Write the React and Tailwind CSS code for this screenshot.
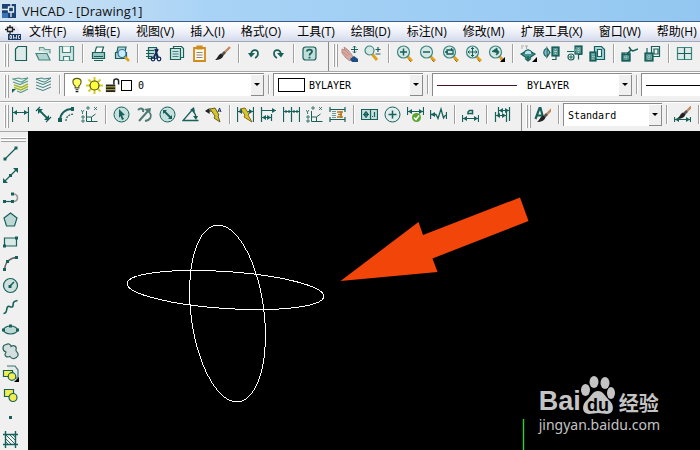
const Icon = ({ children, className = "h-[17px] w-[17px]" }) => (
  <svg
    className={`shrink-0 ${className}`}
    viewBox="0 0 17 17"
    fill="none"
    stroke="#17605a"
    strokeWidth="1.2"
    aria-hidden="true"
  >
    {children}
  </svg>
);

const Lens = ({ children }) => (
  <>
    <path d="M11.500 11.500L16 16" stroke="#e0a020" strokeWidth="2.800" />
    <path d="M12.500 14.500L15 17" stroke="#a5690c" strokeWidth="1" />
    <circle cx="7.500" cy="7" r="6" fill="#d5e8e6" stroke="#3d8780" />
    {children}
  </>
);

const Hatch = ({ x, y, w, h }) => (
  <>
    <rect x={x} y={y} width={w} height={h} fill="#5f9a94" />
    <path
      d={`M${x} ${y + h / 2}h${w}M${x + w / 2} ${y}v${h}`}
      stroke="#a9cfca"
      strokeDasharray="1 1"
    />
  </>
);

const Brush = () => (
  <>
    <path d="M16 2L9 9" stroke="#c08a62" strokeWidth="2.400" />
    <path d="M11 7L8 10" stroke="#555" strokeWidth="2.600" />
    <path d="M9.500 10.500C8 14 5 15 1 15C4 13 4 9.500 7 8.500Z" fill="#222" stroke="none" />
  </>
);

const Corner = () => <path d="M17 12v5h-5z" fill="#000" stroke="none" />;

// filled arrow heads on a horizontal dimension line
const Heads = ({ y, left = 2, right = 15 }) => (
  <path
    d={`M${left} ${y}l4-2.500v5zM${right} ${y}l-4-2.500v5z`}
    fill="#17605a"
    stroke="none"
  />
);

const icons = {
  new: <path d="M6 1.500h8.500v14h-11V4z" fill="#dcebe9" />,
  open: (
    <>
      <path d="M4.500 5.500V2.500h4l1.500 2h5v4" fill="#c5dcda" stroke="#5f9993" />
      <path d="M1 8.500h11l3 6.500H4z" fill="#b5d4d0" stroke="#3d8780" />
    </>
  ),
  save: (
    <>
      <path d="M1.500 1.500h14v14h-14z" fill="#d7e8e6" stroke="#3d8780" />
      <path d="M4.500 1.500v6h8v-6M5.500 15.500v-4h6v4" fill="#f4f8f7" stroke="#3d8780" />
    </>
  ),
  print: (
    <>
      <path d="M5 7l1.500-5h7L12 7" fill="#fff" />
      <path d="M2.500 7.500h12v6h-12z" fill="#9cc6c1" />
      <path d="M4 11.500h9M4 15.500h9" />
    </>
  ),
  preview: (
    <>
      <path d="M4 7l1-5h8l-1 5M2.500 7.500h11v6h-11z" fill="#b4d5d1" />
      <path d="M11 11l5 5" stroke="#e0a020" strokeWidth="2.500" />
      <circle cx="9" cy="8.500" r="4" fill="#cfe9ff" stroke="#2878a8" />
    </>
  ),
  cut: (
    <>
      <path d="M3.500 2.500h8v11h-8z" fill="#bfdad7" />
      <path d="M1 5.500h8M1 8.500h8M1 11.500h6" />
      <path d="M10 4l3 8M13 4l-4 8" stroke="#12235c" strokeWidth="1.700" />
      <circle cx="8" cy="14" r="1.800" stroke="#12235c" />
      <circle cx="14" cy="14" r="1.800" stroke="#12235c" />
    </>
  ),
  copy: (
    <>
      <path d="M5.500 4.500v-3h8l2 2v9h-3" fill="#e9f2f1" />
      <path d="M2.500 3.500h10v11h-10z" fill="#cfe3e1" />
      <path d="M4.500 6.500h6M4.500 9h6M4.500 11.500h6" stroke="#3d8780" />
    </>
  ),
  paste: (
    <>
      <path d="M3 3h11v13H3z" fill="#fff6e4" stroke="#d18a1e" strokeWidth="1.800" />
      <path d="M6 1h5v3H6z" fill="#d18a1e" stroke="#d18a1e" />
      <path d="M5.500 7.500h6M5.500 10h6M5.500 12.500h6" stroke="#888" strokeWidth="1" />
    </>
  ),
  brush: <Brush />,
  undo: (
    <>
      <path d="M5 9C6 4 12 4 12 8.500C12 11 11 12 9 13" strokeWidth="1.700" />
      <path d="M2 8h7l-4 4.500z" fill="#17605a" stroke="none" />
    </>
  ),
  redo: (
    <>
      <path d="M12 9C11 4 5 4 5 8.500C5 11 6 12 8 13" strokeWidth="1.700" />
      <path d="M15 8H8l4 4.500z" fill="#17605a" stroke="none" />
    </>
  ),
  help: (
    <>
      <rect x="2" y="2" width="13" height="13" rx="2.500" fill="#c2deda" />
      <path d="M6 6.500C6 4 11 4 11 6.500C11 8.500 8.500 8 8.500 10.500M8.500 11.800v1.700" strokeWidth="1.800" />
    </>
  ),
  pan: (
    <>
      <path d="M1 4l3 1-1-3 4 3 4 5 1 3-3 3-4-3-4-5z" fill="#d8aaa2" stroke="#b98982" strokeWidth="1" />
      <path d="M2 7l5 4M4 5l5 5" stroke="#b98982" strokeWidth=".8" />
      <path d="M9 14l4-3 4 3v3h-6z" fill="#1c4f84" stroke="none" />
      <path d="M13.500 1v7M10 4.500h7M12 2.500l1.500-1.500L15 2.500M12 6.500L13.500 8 15 6.500" strokeWidth="1" />
    </>
  ),
  zoomRealtime: (
    <>
      <path d="M8 9l5 6" stroke="#e0a020" strokeWidth="3" />
      <circle cx="5.500" cy="5.500" r="4.500" fill="#d5e8e6" stroke="#3d8780" />
      <path d="M11.500 4.500h5M14 2v5M11.500 9h5" />
    </>
  ),
  zoomIn: (
    <Lens>
      <path d="M4 7h7M7.500 3.500v7" strokeWidth="1.500" />
    </Lens>
  ),
  zoomOut: (
    <Lens>
      <path d="M4 7h7" strokeWidth="1.500" />
    </Lens>
  ),
  zoomWindow: (
    <Lens>
      <path d="M5 5h6v4H5zM3 7h3M9.500 3v3" strokeWidth="1.300" />
    </Lens>
  ),
  zoomExtents: (
    <Lens>
      <path d="M3 7h9M7.500 2.500v9M4.500 5.500L3 7l1.500 1.500M10.500 5.500L12 7l-1.500 1.500M6 4l1.500-1.500L9 4M6 10l1.500 1.500L9 10" strokeWidth="1" />
    </Lens>
  ),
  zoomPrev: (
    <>
      <Lens>
        <path d="M4 6.500l5-3.500v2c3 1 2 4-1 5 1-2 1-2 1-2.500z" fill="#17605a" strokeWidth=".8" />
      </Lens>
      <Corner />
    </>
  ),
  block: (
    <>
      <path d="M1 9l7-4 7 4-7 5z" fill="#4d918b" />
      <path d="M4 9a4 4 0 0 1 8 0" fill="#b5e2ef" />
      <path d="M8 11v5M5 13.500l3 2.500 3-2.500" />
      <path d="M1 1h3M1 3h2M5 1h3M6.500 1v3" stroke="#aaa" strokeWidth="1" />
      <Corner />
    </>
  ),
  insertBlock: (
    <>
      <Hatch x={9} y={2} w={7} h={9} />
      <path d="M9.500 2.500h6v8h-6zM9 14.500h4v-4" />
      <path d="M3 3.500c-3 2-3 6 0 8M4 3l3 4.500L4 12z" fill="#7fbcd4" />
    </>
  ),
  attach: (
    <>
      <Hatch x={9} y={1} w={7} h={8} />
      <path d="M1 6.500h7M9.500 1.500h6v8h-3v5" />
      <circle cx="5" cy="12" r="3" fill="#fff" />
      <path d="M3 12h4M5 10v4" strokeWidth="1" />
    </>
  ),
  xref: (
    <>
      <path d="M5.500 3.500v-2h7l3 3v10h-10z" fill="#a5d6dc" />
      <path d="M8.500 4.500h4v7h-4z" fill="#fff" />
      <Hatch x={1} y={7} w={6} h={9} />
      <path d="M1.500 7.500h5v8h-5z" />
    </>
  ),
  refEdit: (
    <>
      <Hatch x={1} y={8} w={8} h={8} />
      <path d="M1.500 9.500h7v6h-7zM6 9l4-4 2 1 5-2M10 5L8 2" strokeWidth="1.500" />
    </>
  ),
  refSave: (
    <>
      <path d="M7.500 1.500h8v10h-8zM10 4h4v5h-4zM3 3v5" />
      <Hatch x={1} y={8} w={8} h={8} />
      <path d="M1.500 8.500h7v7h-7z" />
    </>
  ),
  viewports: (
    <>
      <path d="M1.500 2.500h14v12h-14z" fill="#dcebe9" stroke="#3d8780" />
      <path d="M8.500 2.500v12M1.500 8.500h14" />
    </>
  ),
  layers: (
    <>
      <path d="M1 3l6-1 2 1 7-1-6 4-3-.5zM1 6l7 2.500L16 5" fill="#e8f2ef" stroke="#5a9a8f" />
      <path d="M2 9l7 2.500 7-3.500M2 11.500L9 14l7-3.500" stroke="#a3bb28" strokeWidth="1.500" />
      <path d="M5 15l4 1.500 7-3.500" stroke="#5a9a8f" />
      <path d="M0 17v-4h4z" fill="#17605a" stroke="none" />
    </>
  ),
  layerStates: (
    <path
      d="M1 3l6-1 2 1 7-1-6 4-3-.5zM1 6l7 2.500L16 5M1 9l7 2.500L16 8M1 12l7 2.500 8-3.500"
      fill="#e8f2ef"
      stroke="#447f80"
      strokeWidth="1"
    />
  ),
  dimLinear: (
    <>
      <path d="M.5 1v15M16.500 1v15M1 6.500h15" />
      <Heads y={6.5} left={1} right={16} />
    </>
  ),
  dimAligned: (
    <>
      <path d="M4 4l9 9" strokeWidth="1.800" />
      <path d="M1 5l4-4M11 16l5-5" />
      <path d="M3 3h5L3 8zM14 14V9l-5 5z" fill="#17605a" stroke="none" />
    </>
  ),
  dimArc: (
    <>
      <path d="M2 14C2 8 7 3 14 3" strokeWidth="1.800" />
      <path d="M8 15c0-4 3-7 8-7" strokeDasharray="2 1" />
      <path d="M0 12h4v4H0zM13 1h3v4h-3z" fill="#17605a" stroke="none" />
    </>
  ),
  ordinate: (
    <>
      <path d="M5.500 5v10.500h11M5.500 11h5l4-3M10.500 11v4" strokeWidth="1" />
      <path d="M0 4l1.500 2L3 4M1.500 6v2M6 1h2v2H6zM13 1l3 3M16 1l-3 3M1 10h2v2H1zM1 14h2v2H1z" strokeWidth=".8" />
    </>
  ),
  dimPick: (
    <>
      <circle cx="8.500" cy="8.500" r="7.500" fill="#c6e0de" strokeWidth="1" />
      <path d="M6 3l6 6-3 .5 2 3.500-2 1-1.500-4L6 12z" fill="#17605a" stroke="none" />
    </>
  ),
  dimJog: (
    <>
      <path d="M2 4C5 1 8 3 7 6M12 5l-9 10" strokeWidth="2" stroke="#4e7b73" />
      <path d="M8 3l7-1-1 6z" fill="#4e7b73" stroke="none" />
      <path d="M9 15c6-1 7-5 5-8" strokeWidth="1.800" stroke="#4e7b73" />
    </>
  ),
  dimDiameter: (
    <>
      <circle cx="8.500" cy="8.500" r="7.500" fill="#c6e0de" strokeWidth="1" />
      <path d="M5 5l7 7" strokeWidth="2" />
      <path d="M4 8V4h4zM13 9v4H9z" fill="#17605a" stroke="none" />
    </>
  ),
  dimAngular: (
    <>
      <path d="M16.500 14.500H1L11 3M10 4c2 2 4 4 4 8" strokeWidth="1.300" />
      <path d="M8 4l4-3 1 5zM11 10h5l-2 4z" fill="#17605a" stroke="none" />
    </>
  ),
  dimQuick: (
    <>
      <path d="M1 5h11M1 5l3-2v4z" stroke="#222" fill="#222" />
      <path d="M5 3l5-1 4 7-1 1 2 6-6-4 1-2z" fill="#d6c52c" stroke="#66601b" strokeWidth="1" />
      <path d="M13 6l1.500-4L16 6M13.500 5h2" stroke="#23306b" strokeWidth="1" />
    </>
  ),
  quickDim: (
    <>
      <path d="M.5 1v15M16.500 1v15M1 5.500h15" />
      <path d="M3 3l5-1 4 6-1 1 4 7-8-5 1-2z" fill="#d6c52c" stroke="#8c6a1b" strokeWidth="1" />
      <Heads y={5.5} left={1} right={16} />
    </>
  ),
  baseline: (
    <>
      <path d="M1.500 1v15M2 4.500h14M2 11.500h9M11.500 8v7" />
      <path d="M16 4.500l-4-2.500v5z" fill="#17605a" stroke="none" />
      <Heads y={11.5} left={2} right={11} />
    </>
  ),
  continue: (
    <path d="M.5 1v15M8.500 1v15M16.500 1v15M1 5.500h15M3 4v3M6 4v3M11 4v3M14 4v3" />
  ),
  tolerance: (
    <>
      <path d="M1 1v5M16 1v5M1 11v5M16 11v5M1 3.500h15M1 13.500h15" />
      <path d="M8 6h6M9 8.500h4M8 11h6M12 5v7" stroke="#b8761a" strokeWidth="1.600" />
      <path d="M4 5v7M6 5v7" strokeDasharray="1 1" />
    </>
  ),
  frame: (
    <>
      <path d="M.5 3.500h16v10H.500z" fill="#c6dfdc" />
      <path d="M9.500 3.500v10M2 8.500h6M5 5v7M13.500 6v5M11 10.500h1" />
      <circle cx="5" cy="8.500" r="1.800" />
    </>
  ),
  center: (
    <>
      <circle cx="8.500" cy="8.500" r="7.500" fill="#e2eeed" strokeWidth="1" />
      <path d="M8.500 4.500v8M4.500 8.500h8" strokeWidth="1.500" />
    </>
  ),
  inspect: (
    <>
      <path d="M.5 1v8M16.500 1v8M1 5.500h15" />
      <Heads y={5.5} left={1} right={16} />
      <circle cx="9.500" cy="11.500" r="4.500" fill="#5aa52f" stroke="none" />
      <path d="M7 11.500l2 2 3-4" stroke="#fff" strokeWidth="1.500" />
    </>
  ),
  jogLine: (
    <>
      <path d="M.5 4v9M16.500 6v7M1 8.500h5l2 4L11 3l2.500 9 2-3" strokeWidth="1.300" />
      <path d="M1 8.500L5 6v5z" fill="#17605a" stroke="none" />
    </>
  ),
  dimEdit: (
    <>
      <path d="M.5 9v7M16.500 9v7M1 12.500h15" />
      <Heads y={12.5} left={1} right={16} />
      <path d="M6 8.500V6l1.500-1.500h3v4M6 7.500h4" strokeWidth="1.500" />
    </>
  ),
  dimTextEdit: (
    <>
      <path d="M1.500 6v10M12.500 6v10M2 9.500h11M4.500 1v7M15.500 1v14M5 4.500h10" />
      <Heads y={9.5} left={2} right={12} />
      <Heads y={4.5} left={5} right={15} />
    </>
  ),
  textStyle: (
    <>
      <path d="M1.500 13l4-11h1l3 11M3 9.500h5" strokeWidth="2.200" />
      <g transform="translate(2 1)">
        <Brush />
      </g>
    </>
  ),
  dimStyle: (
    <>
      <g transform="translate(2 -2)">
        <Brush />
      </g>
      <path d="M.5 11v5M16.500 11v5M1 13.500h15" />
      <Heads y={13.5} left={1} right={16} />
    </>
  ),
  line: (
    <>
      <path d="M3 14L14 3" />
      <path d="M1.500 12.500h3v3h-3zM12.500 1.500h3v3h-3z" fill="#17605a" stroke="none" />
    </>
  ),
  xline: (
    <>
      <path d="M3 14L14 3" />
      <path d="M1 11v5h5zM11 1h5v5zM7 7h3v3H7z" fill="#17605a" stroke="none" />
    </>
  ),
  pline: (
    <>
      <path d="M1 12.500h9" />
      <path d="M11 5c6 0 6 7.500 0 7.500" stroke="#999" strokeWidth="1.600" />
      <path d="M1 11h3v3H1zM9 11h3v3H9zM9 3.500h3v3H9z" fill="#17605a" stroke="none" />
    </>
  ),
  polygon: <path d="M8.500 2l6.500 5-2.500 8h-8L2 7z" fill="#bcd8d5" />,
  rectangle: (
    <>
      <path d="M2.500 5h12v8h-12z" fill="#d9e9e7" />
      <path d="M1 11.500h3v3H1zM13 3.500h3v3h-3z" fill="#17605a" stroke="none" />
    </>
  ),
  arc: (
    <>
      <path d="M2.500 15C3 8 7 3 15 2.500" stroke="#666" strokeWidth="1.400" />
      <path d="M1 13h3v3H1zM4 5h3v3H4zM13 1h3v3h-3z" fill="#17605a" stroke="none" />
    </>
  ),
  circle: (
    <>
      <circle cx="8.500" cy="8.500" r="7" fill="#cfe1df" />
      <path d="M8 9l4-4" strokeWidth="1.600" />
      <path d="M6.500 8h3v3h-3z" fill="#17605a" stroke="none" />
    </>
  ),
  spline: <path d="M1.500 14.500c5 0 1.500-8 6-7 5 2 3-2 4-4 1-1.500 2-1.500 4-2" strokeWidth="1.600" />,
  ellipse: (
    <>
      <ellipse cx="8.500" cy="9" rx="7" ry="4" fill="#bcd8d5" />
      <path d="M0 7.500h3v3H0zM14 7.500h3v3h-3zM7 3.500h3v3H7z" fill="#17605a" stroke="none" />
    </>
  ),
  cloud: (
    <path
      d="M4 9C0 8 0 2 4 1.500c3-1.500 5 0 5 2 3-2 6 0 5 3-1 2 3 3 2 6-2 4-6 4-8 1-3 1-5 0-5-2 0-1 1-1.500 1-2.500z"
      fill="#d3dfde"
      stroke="#2f625e"
    />
  ),
  insert: (
    <>
      <path d="M5 1h8l3 4v8H8" fill="#e1ecea" stroke="#3d7470" />
      <path d="M1.500 5.500h9v6h-9z" fill="#f3ee4f" />
      <circle cx="10" cy="11.500" r="3.800" fill="#f3ee4f" />
      <Corner />
    </>
  ),
  makeBlock: (
    <>
      <path d="M2.500 2.500h9v7h-9z" fill="#f3ee4f" />
      <circle cx="11" cy="10.500" r="4" fill="#f3ee4f" />
    </>
  ),
  point: <path d="M7 7h3v3H7z" fill="#17605a" stroke="none" />,
  hatch: (
    <>
      <path d="M3.500 0v17M13.500 0v17M1 3.500h15M1 13.500h15" strokeWidth="1.400" />
      <path d="M4 8l5 5M4 4l9 9M8 4l5 5M4 11l2 2M11 4l2 2" strokeWidth=".9" />
    </>
  ),
};

const menus = [
  "文件(F)",
  "编辑(E)",
  "视图(V)",
  "插入(I)",
  "格式(O)",
  "工具(T)",
  "绘图(D)",
  "标注(N)",
  "修改(M)",
  "扩展工具(X)",
  "窗口(W)",
  "帮助(H)",
];

const standardTools = "new open save | print preview | cut copy paste brush | undo redo | help";
const zoomTools =
  "pan zoomRealtime | zoomIn zoomOut zoomWindow zoomExtents zoomPrev | block insertBlock attach xref | refEdit refSave | viewports";
const dimTools =
  "dimLinear dimAligned dimArc ordinate | dimPick dimJog dimDiameter dimAngular dimQuick | quickDim baseline continue ordinate tolerance | frame center inspect jogLine | dimEdit | dimTextEdit";
const drawTools =
  "line xline pline polygon rectangle arc circle spline ellipse cloud insert makeBlock point hatch";

const Grip = () => (
  <div className="mt-0.5 ml-1 flex h-[23px] w-[5px] shrink-0 justify-between">
    <span className="w-0.5 border-r border-[#a0a0a0] bg-white" />
    <span className="w-0.5 border-r border-[#a0a0a0] bg-white" />
  </div>
);

const Separator = () => (
  <div className="flex h-[23px] w-[9px] shrink-0 justify-center py-0.5">
    <span className="w-0.5 border-l border-[#a0a0a0] bg-white" />
  </div>
);

const ToolButton = ({ name }) => (
  <button
    type="button"
    aria-label={name}
    className="flex h-[23px] w-[23px] shrink-0 items-center justify-center hover:bg-[#dfe9f5]"
  >
    <Icon>{icons[name]}</Icon>
  </button>
);

const Tools = ({ list }) =>
  list
    .split(" ")
    .map((name, i) => (name === "|" ? <Separator key={i} /> : <ToolButton key={i} name={name} />));

const Combo = ({ label, value, width, children, selectClass = "" }) => (
  <div
    className={`flex h-[23px] shrink-0 items-center border-t border-l border-[#8a8a8a] bg-white ${width}`}
  >
    {children}
    <select
      aria-label={label}
      defaultValue={value}
      className={`h-full min-w-0 flex-1 appearance-none bg-transparent font-['DejaVu_Sans_Mono','Noto_Sans_CJK_SC',monospace] text-[10px] text-black outline-none ${selectClass}`}
    >
      <option>{value}</option>
    </select>
    <span className="pointer-events-none flex h-[21px] w-[13px] shrink-0 items-center justify-center border-r border-b border-[#8a8a8a] bg-[#f0f0f0]">
      <span className="border-x-3 border-t-3 border-x-transparent border-t-black" />
    </span>
  </div>
);

const LayerIcons = () => (
  <div className="flex shrink-0 items-center gap-px pl-1">
    <Icon className="h-4 w-4">
      <path d="M8.500 1.500c-6 0-5 6-2 8v2h4v-2c3-2 4-8-2-8z" fill="#ffff66" stroke="#55551a" />
      <path d="M7 13.500h3M7 15.500h3" stroke="#222" />
    </Icon>
    <Icon>
      <path d="M8.500 0v17M0 8.500h17M2.500 2.500l12 12M14.500 2.500l-12 12" stroke="#d8d020" strokeWidth="2" />
      <circle cx="8.500" cy="8.500" r="4.500" fill="#ffff3c" stroke="#55500a" />
    </Icon>
    <Icon className="h-4 w-4">
      <path d="M2 8h10v8H2z" fill="#222" stroke="none" />
      <path d="M2 10.500h10M2 13.500h10" stroke="#cfc93a" strokeWidth="1" />
      <path d="M10.500 8V4.500c0-3 5-3 5 0V8" stroke="#222" strokeWidth="1.600" />
    </Icon>
    <span className="h-[11px] w-[11px] border border-black" />
  </div>
);

const TitleBar = () => (
  <header className="flex h-[22px] items-center gap-1 border-b border-[#3f5d80] bg-linear-to-r from-[#d3e4f2] via-[#a8d3f6] via-30% to-[#93c7f1] pl-0.5">
    <svg className="h-4 w-4 shrink-0" viewBox="0 0 16 16" fill="none" aria-hidden="true">
      <path d="M0 1h14v14H0z" fill="#1c4273" />
      <path d="M0 10h6v5H0z" fill="#3a74b8" />
      <path d="M6.500 4h5v5h-5zM0 6.500h6M9 0v4M9 9v5" stroke="#e6effa" strokeWidth="1.300" />
    </svg>
    <h1 className="font-['Open_Sans',sans-serif] text-[13px] leading-5 text-[#111]">
      VHCAD - [Drawing1]
    </h1>
  </header>
);

const MenuBar = () => (
  <nav className="flex h-5 items-center overflow-hidden border-b border-[#a3a8b5] bg-linear-to-b from-white via-[#eef1f9] to-[#d5dbec] pl-[5px]">
    <svg className="h-4 w-4 shrink-0" viewBox="0 0 16 16" fill="none" aria-hidden="true">
      <path d="M1 2h10l3 3v10H4" fill="#e4e9f4" />
      <path d="M2.500 3.500h5v4h-5zM5 1v2M0 5.500h2M8 5.500h2M5 8v2" stroke="#222" strokeWidth="1.300" />
      <path d="M3 10h13v6H3z" fill="#1c3a66" />
      <path d="M5 11.500v3h1.500v-3zM8.500 11v3.500l1.500-1 1.500 1V11M15 11.500h-1.500v3H15" stroke="#fff" strokeWidth=".8" />
    </svg>
    {menus.map((menu) => (
      <button
        key={menu}
        type="button"
        className="shrink-0 px-2 font-['Open_Sans','Noto_Sans_CJK_SC',sans-serif] text-xs leading-4 whitespace-nowrap text-black"
      >
        {menu}
      </button>
    ))}
  </nav>
);

const Drawing = () => (
  <svg className="block h-[319px] w-[672px] shrink-0" viewBox="28 131 672 319" fill="none">
    <g stroke="#fff" shapeRendering="crispEdges">
      <ellipse cx="225.500" cy="290" rx="98.500" ry="18.500" transform="rotate(3.800 225.500 290)" />
      <ellipse cx="227.500" cy="313.500" rx="36.500" ry="89" transform="rotate(-7.300 227.500 313.500)" />
    </g>
    <path d="M340.500 281L418.500 222L423 235L520 197.500L528.500 221L432.500 258.500L437.500 272Z" fill="#f2450a" />
    <path d="M523.500 419v31" stroke="#2fd02f" strokeWidth="1.4" />
  </svg>
);

const Watermark = () => (
  <div className="absolute right-10 bottom-[15px] flex flex-col text-[#c4c4c4]">
    <div className="flex h-[42px] items-end">
      <span className="font-['Liberation_Sans',sans-serif] text-[27px] leading-7 font-bold">Bai</span>
      <svg className="h-10 w-[34px]" viewBox="0 0 34 40" fill="#c4c4c4">
        <ellipse cx="4.500" cy="15" rx="4.500" ry="6" />
        <ellipse cx="13" cy="7" rx="4.500" ry="6" />
        <ellipse cx="24" cy="8" rx="4.500" ry="6" />
        <ellipse cx="30" cy="18" rx="4" ry="6" />
        <path d="M17 16c5 0 7 5 11 9 6 5 5 14-2 14-3 0-6-1-9-1s-6 1-9 1c-7 0-8-9-2-14 4-4 6-9 11-9z" />
        <text
          x="17"
          y="36"
          textAnchor="middle"
          fontFamily="Liberation Sans"
          fontSize="18"
          fontWeight="bold"
          fill="#000"
        >
          du
        </text>
      </svg>
      <span className="pl-1 font-['Noto_Sans_CJK_SC',sans-serif] text-[20px] leading-6 font-bold">
        经验
      </span>
    </div>
    <span className="font-['Noto_Sans',sans-serif] text-[14px] leading-5">jingyan.baidu.com</span>
  </div>
);

const App = () => {
  return (
    <div className="flex min-h-screen flex-col overflow-hidden bg-[#f0f0f0]">
      <TitleBar />
      <MenuBar />

      {/* Standard + zoom */}
      <div className="flex h-[30px] items-start overflow-hidden border-b border-[#a8a8a8]">
        <div className="flex shrink-0 pr-[7px]">
          <Grip />
          <Tools list={standardTools} />
        </div>
        <div className="flex h-full shrink-0 border-l border-[#8a8a8a]">
          <Grip />
          <Tools list={zoomTools} />
        </div>
      </div>

      {/* Layers and object properties */}
      <div className="flex h-[30px] items-start overflow-hidden border-t border-b border-t-white border-b-[#a8a8a8]">
        <Grip />
        <Tools list="layers layerStates" />
        <Separator />
        <Combo label="Layer" value="0" width="w-[200px]" selectClass="pl-1.5">
          <LayerIcons />
        </Combo>
        <Separator />
        <Combo label="Color" value="BYLAYER" width="w-[150px]" selectClass="pl-1">
          <span className="ml-1 h-3.5 w-[27px] shrink-0 border border-black" />
        </Combo>
        <Separator />
        <Combo label="Linetype" value="BYLAYER" width="w-[200px]" selectClass="pl-2.5">
          <span className="ml-1 h-px w-20 shrink-0 bg-[#4a1028]" />
        </Combo>
        <Separator />
        <Combo label="Lineweight" value="BYLAYER" width="w-[200px]" selectClass="pl-2.5">
          <span className="ml-1 h-px w-20 shrink-0 bg-black" />
        </Combo>
      </div>

      {/* Dimensions + styles */}
      <div className="flex h-[29px] items-start overflow-hidden border-t border-white">
        <div className="flex shrink-0 pr-[7px]">
          <Grip />
          <Tools list={dimTools} />
        </div>
        <div className="flex h-full shrink-0 border-l border-[#8a8a8a]">
          <Grip />
          <Tools list="textStyle |" />
          <Combo label="Text style" value="Standard" width="w-[99px]" selectClass="pl-1" />
          <Tools list="| dimStyle |" />
        </div>
      </div>

      <div className="flex flex-1">
        <aside className="flex w-7 shrink-0 flex-col border-t border-[#a8a8a8] pl-px">
          <div className="mt-[5px] flex h-[5px] w-[25px] shrink-0 flex-col justify-between">
            <span className="h-0.5 border-b border-[#a0a0a0] bg-white" />
            <span className="h-0.5 border-b border-[#a0a0a0] bg-white" />
          </div>
          {drawTools.split(" ").map((name) => (
            <button
              key={name}
              type="button"
              aria-label={name}
              className="flex h-[22px] w-[19px] shrink-0 items-center justify-center"
            >
              <Icon>{icons[name]}</Icon>
            </button>
          ))}
        </aside>
        <main className="relative flex-1 overflow-hidden bg-black">
          <Drawing />
          <Watermark />
        </main>
      </div>
    </div>
  );
};

export default App;
